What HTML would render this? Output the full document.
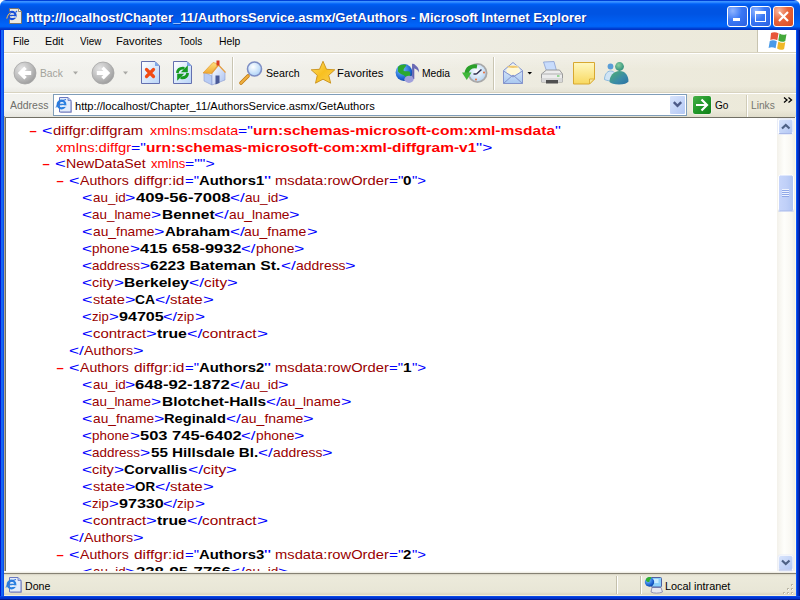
<!DOCTYPE html>
<html><head><meta charset="utf-8">
<style>
*{margin:0;padding:0;box-sizing:border-box}
html,body{width:800px;height:600px;overflow:hidden;background:#fff;font-family:"Liberation Sans",sans-serif}
.a{position:absolute}
.tx{position:absolute;white-space:nowrap;transform-origin:0 0}
#title{left:0;top:0;width:800px;height:30px;border-radius:6px 6px 0 0;
background:linear-gradient(#0040d8 0,#0040d8 1px,#3d95ff 1px,#3a90ff 2px,#1a78ff 3px,#0060f5 4px,#0058ea 6px,#0054e3 9px,#0054e3 14px,#005cee 20px,#0064fa 25px,#0062f5 26.5px,#0052e4 27.5px,#0040d4 28.5px,#0030c0 30px)}
#frameL{left:0;top:30px;width:4px;height:570px;background:linear-gradient(90deg,#0019d0 0,#0019d0 1px,#1466f6 1px,#1466f6 3px,#0a4ee8 3px)}
#frameR{left:796px;top:30px;width:4px;height:570px;background:linear-gradient(90deg,#0a56f8 0,#0a56f8 1px,#0038d8 1px,#0028b0 3px,#001890 3px)}
#frameB{left:0;top:596px;width:800px;height:4px;background:linear-gradient(#0a48e6 0,#0a48e6 1px,#0038d8 1px,#0030c8 3px,#001890 3px)}
.wb{position:absolute;top:6px;width:21px;height:21px;border:1px solid #fff;border-radius:3px;overflow:hidden}
.chrome{background:#ece9d8}
#menubar{left:4px;top:30px;width:792px;height:22px;background:linear-gradient(90deg,#f2f2ee 0,#f1f0ea 250px,#edebdf 550px,#ece9d9 792px)}
#logo{left:757px;top:30px;width:39px;height:22px;background:#fff;border-left:1px solid #c8c4b0}
#l52{left:4px;top:52px;width:792px;height:1px;background:#d8d3c0}
#l53{left:4px;top:53px;width:792px;height:1px;background:#fff}
#toolbar{left:4px;top:54px;width:792px;height:38px;background:linear-gradient(rgba(255,255,255,.3),rgba(255,255,255,0) 40%,rgba(0,0,0,0) 85%,rgba(90,80,40,.05)),linear-gradient(90deg,#f2f2ee 0,#f1f0ea 250px,#edebdf 550px,#ece9d9 792px)}
#l92{left:4px;top:92px;width:792px;height:1px;background:#d8d3c0}
#l93{left:4px;top:93px;width:792px;height:1px;background:#fff}
#addrbar{left:4px;top:94px;width:792px;height:23px;background:linear-gradient(rgba(0,0,0,0) 70%,rgba(90,80,40,.08)),linear-gradient(90deg,#f2f2ee 0,#f1f0ea 250px,#edebdf 550px,#ece9d9 792px)}
#addrbox{left:53px;top:94px;width:634px;height:22px;border:1px solid #7f9db9;background:#fff}
#content{left:4px;top:117px;width:773px;height:454px;background:#fff;overflow:hidden}
#scroll{left:777px;top:118px;width:18px;height:453px;background:linear-gradient(90deg,#f3f1ea,#fefefb 40%,#f8f7f2 80%,#eeede5)}
#status{left:4px;top:573px;width:792px;height:23px;background:linear-gradient(#858173 0,#858173 1px,#d0ccbc 1px,#e6e3d4 2px,#eceadb 4px,#e8e6d6 19px,#ddd8c4 21px,#ddd8c4 22px,#f4f0dc 22px)}
.g{position:absolute;white-space:nowrap;font-size:13px;line-height:17px;transform-origin:0 0}
.b{color:#f00;font-weight:bold}
.m{color:#00f}
.t{color:#900}
.ns{color:#f00}
.tx2{font-weight:bold;color:#000}
.nv{font-weight:bold;color:#f00}
.sep{position:absolute;width:2px;background:linear-gradient(90deg,#c5c2b2 1px,#fff 1px)}
</style></head><body>
<div id="title" class="a"></div>
<div id="frameL" class="a"></div>
<div id="frameR" class="a"></div>
<div id="frameB" class="a"></div>
<!-- window icon -->
<svg class="a" style="left:0;top:0" width="26" height="28" viewBox="0 0 26 28">
 <path d="M9.5 8.5h9l3 3v12h-12z" fill="#ecebe4" stroke="#7a7060" stroke-width="0.9"/>
 <path d="M18.5 8.5v3h3" fill="#fff" stroke="#7a7060" stroke-width="0.8"/>
 <circle cx="12" cy="15.5" r="3.6" fill="none" stroke="#1a50d8" stroke-width="2.2"/>
 <path d="M8.5 15.5h7" stroke="#1a50d8" stroke-width="1.5"/>
 <rect x="12" y="16.3" width="4" height="1.4" fill="#ecebe4"/>
 <path d="M15.5 12.5l1.5-1.5M6.5 19c0.5-3 2-5 4-6.5" fill="none" stroke="#2a60e0" stroke-width="1.2"/>
 <path d="M6.8 18.5c0.5-2.5 1.8-4.5 3.5-5.8" fill="none" stroke="#f0c040" stroke-width="1"/>
</svg>
<div class="wb" style="left:727px;background:radial-gradient(ellipse at 25% 20%,#8fb4ff 0,#3a78f5 45%,#2a5fe0 100%)"><div class="a" style="left:5px;top:11px;width:7px;height:3px;background:#fff"></div></div>
<div class="wb" style="left:750px;background:radial-gradient(ellipse at 25% 20%,#8fb4ff 0,#3a78f5 45%,#2a5fe0 100%)"><div class="a" style="left:4px;top:4px;width:11px;height:11px;border:1px solid #fff;border-top-width:3px"></div></div>
<div class="wb" style="left:773px;background:radial-gradient(ellipse at 25% 20%,#f8b8a0 0,#e8643a 45%,#d84a20 100%)">
 <svg class="a" style="left:3px;top:3px" width="13" height="13" viewBox="0 0 13 13"><path d="M2 2L11 11M11 2L2 11" stroke="#fff" stroke-width="2.2"/></svg></div>
<div id="menubar" class="a"></div>
<div id="logo" class="a">
 <svg class="a" style="left:8.5px;top:0px" width="22" height="20" viewBox="0 0 22 20">
  <path d="M4 3c2-1.2 5-1.2 7.5 0.3l-1.2 7c-2.5-1.5-5-1.5-7-0.3z" fill="#e8553a"/>
  <path d="M12.5 3.6c2.5 1.5 5 1.5 7 0.3l-1.2 7c-2 1.2-4.5 1.2-7-0.3z" fill="#44a83a"/>
  <path d="M2.8 11c2-1.2 4.5-1.2 7 0.3l-1.2 7c-2.5-1.5-5-1.5-7-0.3z" fill="#4a9ae8"/>
  <path d="M11.3 11.6c2.5 1.5 5 1.5 7 0.3l-1.2 7c-2 1.2-4.5 1.2-7-0.3z" fill="#f0b828"/>
 </svg>
</div>
<div id="l52" class="a"></div>
<div id="l53" class="a"></div>
<div id="toolbar" class="a"></div>
<div id="l92" class="a"></div>
<div id="l93" class="a"></div>
<div id="addrbar" class="a"></div>
<div id="addrbox" class="a"></div>
<div id="content" class="a"><span class="g b" style="left:25.5px;top:4.99px">&#8211;</span>
<span class="g m" style="left:38.29px;top:4.99px;transform:scaleX(1.3804)">&lt;</span>
<span class="g t" style="left:48.77px;top:4.99px;transform:scaleX(1.1409)">diffgr:diffgram</span>
<span class="g ns" style="left:145.84px;top:4.99px;transform:scaleX(1.0994)">xmlns:msdata</span>
<span class="g m" style="left:234.00px;top:4.99px;transform:scaleX(1.2054)">=&quot;</span>
<span class="g nv" style="left:248.71px;top:4.99px;transform:scaleX(1.1981)">urn:schemas-microsoft-com:xml-msdata</span>
<span class="g m" style="left:550.78px;top:4.99px;transform:scaleX(1.2635)">&quot;</span>
<span class="g ns" style="left:51.84px;top:21.99px;transform:scaleX(1.1345)">xmlns:diffgr</span>
<span class="g m" style="left:127.24px;top:21.99px;transform:scaleX(1.2187)">=&quot;</span>
<span class="g nv" style="left:142.11px;top:21.99px;transform:scaleX(1.1909)">urn:schemas-microsoft-com:xml-diffgram-v1</span>
<span class="g m" style="left:472.45px;top:21.99px;transform:scaleX(1.3313)">&quot;&gt;</span>
<span class="g b" style="left:38.5px;top:37.99px">&#8211;</span>
<span class="g m" style="left:50.79px;top:37.99px;transform:scaleX(1.4140)">&lt;</span>
<span class="g t" style="left:61.53px;top:37.99px;transform:scaleX(1.0904)">NewDataSet</span>
<span class="g ns" style="left:146.84px;top:37.99px;transform:scaleX(1.0083)">xmlns</span>
<span class="g m" style="left:181.07px;top:37.99px;transform:scaleX(1.2137)">=&quot;&quot;&gt;</span>
<span class="g b" style="left:52.5px;top:54.99px">&#8211;</span>
<span class="g m" style="left:65.29px;top:54.99px;transform:scaleX(1.3832)">&lt;</span>
<span class="g t" style="left:75.80px;top:54.99px;transform:scaleX(1.0875)">Authors</span>
<span class="g t" style="left:129.90px;top:54.99px;transform:scaleX(1.1898)">diffgr:id</span>
<span class="g m" style="left:180.62px;top:54.99px;transform:scaleX(1.1487)">=&quot;</span>
<span class="g tx2" style="left:194.64px;top:54.99px;transform:scaleX(1.1419)">Authors1</span>
<span class="g m" style="left:259.80px;top:54.99px;transform:scaleX(1.5477)">&quot;</span>
<span class="g t" style="left:271.05px;top:54.99px;transform:scaleX(1.1331)">msdata:rowOrder</span>
<span class="g m" style="left:384.84px;top:54.99px;transform:scaleX(1.1795)">=&quot;</span>
<span class="g tx2" style="left:399.23px;top:54.99px;transform:scaleX(1.1690)">0</span>
<span class="g m" style="left:407.69px;top:54.99px;transform:scaleX(1.1479)">&quot;&gt;</span>
<span class="g m" style="left:78.29px;top:71.99px;transform:scaleX(1.3618)">&lt;</span>
<span class="g t" style="left:88.63px;top:71.99px;transform:scaleX(1.0315)">au_id</span>
<span class="g m" style="left:121.44px;top:71.99px;transform:scaleX(1.3618)">&gt;</span>
<span class="g tx2" style="left:131.78px;top:71.99px;transform:scaleX(1.2819)">409-56-7008</span>
<span class="g m" style="left:226.29px;top:71.99px;transform:scaleX(1.3109)">&lt;/</span>
<span class="g t" style="left:240.98px;top:71.99px;transform:scaleX(1.0451)">au_id</span>
<span class="g m" style="left:274.22px;top:71.99px;transform:scaleX(1.3797)">&gt;</span>
<span class="g m" style="left:78.29px;top:88.99px;transform:scaleX(1.3382)">&lt;</span>
<span class="g t" style="left:88.45px;top:88.99px;transform:scaleX(1.0321)">au_lname</span>
<span class="g m" style="left:147.38px;top:88.99px;transform:scaleX(1.3382)">&gt;</span>
<span class="g tx2" style="left:157.54px;top:88.99px;transform:scaleX(1.1927)">Bennet</span>
<span class="g m" style="left:210.09px;top:88.99px;transform:scaleX(1.3060)">&lt;/</span>
<span class="g t" style="left:224.73px;top:88.99px;transform:scaleX(1.0602)">au_lname</span>
<span class="g m" style="left:285.26px;top:88.99px;transform:scaleX(1.3746)">&gt;</span>
<span class="g m" style="left:78.29px;top:105.99px;transform:scaleX(1.3749)">&lt;</span>
<span class="g t" style="left:88.73px;top:105.99px;transform:scaleX(1.0632)">au_fname</span>
<span class="g m" style="left:150.21px;top:105.99px;transform:scaleX(1.3749)">&gt;</span>
<span class="g tx2" style="left:160.64px;top:105.99px;transform:scaleX(1.1527)">Abraham</span>
<span class="g m" style="left:225.59px;top:105.99px;transform:scaleX(1.3238)">&lt;/</span>
<span class="g t" style="left:240.43px;top:105.99px;transform:scaleX(1.0774)">au_fname</span>
<span class="g m" style="left:302.72px;top:105.99px;transform:scaleX(1.3933)">&gt;</span>
<span class="g m" style="left:78.29px;top:122.99px;transform:scaleX(1.3204)">&lt;</span>
<span class="g t" style="left:88.32px;top:122.99px;transform:scaleX(1.0357)">phone</span>
<span class="g m" style="left:125.76px;top:122.99px;transform:scaleX(1.3204)">&gt;</span>
<span class="g tx2" style="left:135.78px;top:122.99px;transform:scaleX(1.2651)">415&nbsp;658-9932</span>
<span class="g m" style="left:237.29px;top:122.99px;transform:scaleX(1.2848)">&lt;/</span>
<span class="g t" style="left:251.69px;top:122.99px;transform:scaleX(1.0607)">phone</span>
<span class="g m" style="left:290.03px;top:122.99px;transform:scaleX(1.3523)">&gt;</span>
<span class="g m" style="left:78.29px;top:139.99px;transform:scaleX(1.3374)">&lt;</span>
<span class="g t" style="left:88.45px;top:139.99px;transform:scaleX(1.0351)">address</span>
<span class="g m" style="left:136.32px;top:139.99px;transform:scaleX(1.3374)">&gt;</span>
<span class="g tx2" style="left:146.48px;top:139.99px;transform:scaleX(1.2114)">6223&nbsp;Bateman&nbsp;St.</span>
<span class="g m" style="left:276.89px;top:139.99px;transform:scaleX(1.3153)">&lt;/</span>
<span class="g t" style="left:291.63px;top:139.99px;transform:scaleX(1.0715)">address</span>
<span class="g m" style="left:341.19px;top:139.99px;transform:scaleX(1.3844)">&gt;</span>
<span class="g m" style="left:78.29px;top:156.99px;transform:scaleX(1.3213)">&lt;</span>
<span class="g t" style="left:88.33px;top:156.99px;transform:scaleX(1.1121)">city</span>
<span class="g m" style="left:110.01px;top:156.99px;transform:scaleX(1.3213)">&gt;</span>
<span class="g tx2" style="left:120.04px;top:156.99px;transform:scaleX(1.1982)">Berkeley</span>
<span class="g m" style="left:184.99px;top:156.99px;transform:scaleX(1.3354)">&lt;/</span>
<span class="g t" style="left:199.96px;top:156.99px;transform:scaleX(1.1831)">city</span>
<span class="g m" style="left:223.03px;top:156.99px;transform:scaleX(1.4056)">&gt;</span>
<span class="g m" style="left:78.29px;top:173.99px;transform:scaleX(1.3863)">&lt;</span>
<span class="g t" style="left:88.82px;top:173.99px;transform:scaleX(1.1290)">state</span>
<span class="g m" style="left:120.64px;top:173.99px;transform:scaleX(1.3863)">&gt;</span>
<span class="g tx2" style="left:131.16px;top:173.99px;transform:scaleX(1.0668)">CA</span>
<span class="g m" style="left:151.19px;top:173.99px;transform:scaleX(1.3518)">&lt;/</span>
<span class="g t" style="left:166.34px;top:173.99px;transform:scaleX(1.1587)">state</span>
<span class="g m" style="left:199.00px;top:173.99px;transform:scaleX(1.4228)">&gt;</span>
<span class="g m" style="left:78.29px;top:190.99px;transform:scaleX(1.2872)">&lt;</span>
<span class="g t" style="left:88.07px;top:190.99px;transform:scaleX(1.0088)">zip</span>
<span class="g m" style="left:104.83px;top:190.99px;transform:scaleX(1.2872)">&gt;</span>
<span class="g tx2" style="left:114.60px;top:190.99px;transform:scaleX(1.2390)">94705</span>
<span class="g m" style="left:159.39px;top:190.99px;transform:scaleX(1.2553)">&lt;/</span>
<span class="g t" style="left:173.46px;top:190.99px;transform:scaleX(1.0355)">zip</span>
<span class="g m" style="left:190.67px;top:190.99px;transform:scaleX(1.3213)">&gt;</span>
<span class="g m" style="left:78.29px;top:207.99px;transform:scaleX(1.4131)">&lt;</span>
<span class="g t" style="left:89.02px;top:207.99px;transform:scaleX(1.1499)">contract</span>
<span class="g m" style="left:142.20px;top:207.99px;transform:scaleX(1.4131)">&gt;</span>
<span class="g tx2" style="left:152.93px;top:207.99px;transform:scaleX(1.2122)">true</span>
<span class="g m" style="left:182.69px;top:207.99px;transform:scaleX(1.3775)">&lt;/</span>
<span class="g t" style="left:198.13px;top:207.99px;transform:scaleX(1.1799)">contract</span>
<span class="g m" style="left:252.69px;top:207.99px;transform:scaleX(1.4499)">&gt;</span>
<span class="g m" style="left:65.29px;top:224.99px;transform:scaleX(1.3240)">&lt;/</span>
<span class="g t" style="left:80.13px;top:224.99px;transform:scaleX(1.0957)">Authors</span>
<span class="g m" style="left:129.22px;top:224.99px;transform:scaleX(1.3936)">&gt;</span>
<span class="g b" style="left:52.5px;top:241.99px">&#8211;</span>
<span class="g m" style="left:65.29px;top:241.99px;transform:scaleX(1.3832)">&lt;</span>
<span class="g t" style="left:75.80px;top:241.99px;transform:scaleX(1.0875)">Authors</span>
<span class="g t" style="left:129.90px;top:241.99px;transform:scaleX(1.1898)">diffgr:id</span>
<span class="g m" style="left:180.62px;top:241.99px;transform:scaleX(1.1487)">=&quot;</span>
<span class="g tx2" style="left:194.64px;top:241.99px;transform:scaleX(1.1449)">Authors2</span>
<span class="g m" style="left:259.97px;top:241.99px;transform:scaleX(1.5098)">&quot;</span>
<span class="g t" style="left:271.05px;top:241.99px;transform:scaleX(1.1331)">msdata:rowOrder</span>
<span class="g m" style="left:384.84px;top:241.99px;transform:scaleX(1.1520)">=&quot;</span>
<span class="g tx2" style="left:398.90px;top:241.99px;transform:scaleX(1.1893)">1</span>
<span class="g m" style="left:407.50px;top:241.99px;transform:scaleX(1.1633)">&quot;&gt;</span>
<span class="g m" style="left:78.29px;top:258.99px;transform:scaleX(1.3540)">&lt;</span>
<span class="g t" style="left:88.57px;top:258.99px;transform:scaleX(1.0256)">au_id</span>
<span class="g m" style="left:121.20px;top:258.99px;transform:scaleX(1.3540)">&gt;</span>
<span class="g tx2" style="left:131.48px;top:258.99px;transform:scaleX(1.2861)">648-92-1872</span>
<span class="g m" style="left:226.29px;top:258.99px;transform:scaleX(1.3109)">&lt;/</span>
<span class="g t" style="left:240.98px;top:258.99px;transform:scaleX(1.0451)">au_id</span>
<span class="g m" style="left:274.22px;top:258.99px;transform:scaleX(1.3797)">&gt;</span>
<span class="g m" style="left:78.29px;top:275.99px;transform:scaleX(1.3382)">&lt;</span>
<span class="g t" style="left:88.45px;top:275.99px;transform:scaleX(1.0321)">au_lname</span>
<span class="g m" style="left:147.38px;top:275.99px;transform:scaleX(1.3382)">&gt;</span>
<span class="g tx2" style="left:157.54px;top:275.99px;transform:scaleX(1.1917)">Blotchet-Halls</span>
<span class="g m" style="left:261.69px;top:275.99px;transform:scaleX(1.3075)">&lt;/</span>
<span class="g t" style="left:276.34px;top:275.99px;transform:scaleX(1.0615)">au_lname</span>
<span class="g m" style="left:336.95px;top:275.99px;transform:scaleX(1.3762)">&gt;</span>
<span class="g m" style="left:78.29px;top:292.99px;transform:scaleX(1.3649)">&lt;</span>
<span class="g t" style="left:88.66px;top:292.99px;transform:scaleX(1.0554)">au_fname</span>
<span class="g m" style="left:149.68px;top:292.99px;transform:scaleX(1.3649)">&gt;</span>
<span class="g tx2" style="left:160.04px;top:292.99px;transform:scaleX(1.1267)">Reginald</span>
<span class="g m" style="left:221.89px;top:292.99px;transform:scaleX(1.3253)">&lt;/</span>
<span class="g t" style="left:236.74px;top:292.99px;transform:scaleX(1.0786)">au_fname</span>
<span class="g m" style="left:299.11px;top:292.99px;transform:scaleX(1.3949)">&gt;</span>
<span class="g m" style="left:78.29px;top:309.99px;transform:scaleX(1.3153)">&lt;</span>
<span class="g t" style="left:88.28px;top:309.99px;transform:scaleX(1.0317)">phone</span>
<span class="g m" style="left:125.57px;top:309.99px;transform:scaleX(1.3153)">&gt;</span>
<span class="g tx2" style="left:135.56px;top:309.99px;transform:scaleX(1.2679)">503&nbsp;745-6402</span>
<span class="g m" style="left:237.29px;top:309.99px;transform:scaleX(1.2848)">&lt;/</span>
<span class="g t" style="left:251.69px;top:309.99px;transform:scaleX(1.0607)">phone</span>
<span class="g m" style="left:290.03px;top:309.99px;transform:scaleX(1.3523)">&gt;</span>
<span class="g m" style="left:78.29px;top:326.99px;transform:scaleX(1.3391)">&lt;</span>
<span class="g t" style="left:88.46px;top:326.99px;transform:scaleX(1.0364)">address</span>
<span class="g m" style="left:136.39px;top:326.99px;transform:scaleX(1.3391)">&gt;</span>
<span class="g tx2" style="left:146.56px;top:326.99px;transform:scaleX(1.1686)">55&nbsp;Hillsdale&nbsp;Bl.</span>
<span class="g m" style="left:253.79px;top:326.99px;transform:scaleX(1.3136)">&lt;/</span>
<span class="g t" style="left:268.51px;top:326.99px;transform:scaleX(1.0701)">address</span>
<span class="g m" style="left:318.00px;top:326.99px;transform:scaleX(1.3826)">&gt;</span>
<span class="g m" style="left:78.29px;top:343.99px;transform:scaleX(1.3330)">&lt;</span>
<span class="g t" style="left:88.41px;top:343.99px;transform:scaleX(1.1220)">city</span>
<span class="g m" style="left:110.29px;top:343.99px;transform:scaleX(1.3330)">&gt;</span>
<span class="g tx2" style="left:120.41px;top:343.99px;transform:scaleX(1.1524)">Corvallis</span>
<span class="g m" style="left:183.69px;top:343.99px;transform:scaleX(1.3519)">&lt;/</span>
<span class="g t" style="left:198.84px;top:343.99px;transform:scaleX(1.1977)">city</span>
<span class="g m" style="left:222.20px;top:343.99px;transform:scaleX(1.4229)">&gt;</span>
<span class="g m" style="left:78.29px;top:360.99px;transform:scaleX(1.3863)">&lt;</span>
<span class="g t" style="left:88.82px;top:360.99px;transform:scaleX(1.1290)">state</span>
<span class="g m" style="left:120.64px;top:360.99px;transform:scaleX(1.3863)">&gt;</span>
<span class="g tx2" style="left:131.16px;top:360.99px;transform:scaleX(1.0272)">OR</span>
<span class="g m" style="left:151.19px;top:360.99px;transform:scaleX(1.3541)">&lt;/</span>
<span class="g t" style="left:166.37px;top:360.99px;transform:scaleX(1.1607)">state</span>
<span class="g m" style="left:199.08px;top:360.99px;transform:scaleX(1.4252)">&gt;</span>
<span class="g m" style="left:78.29px;top:377.99px;transform:scaleX(1.2872)">&lt;</span>
<span class="g t" style="left:88.07px;top:377.99px;transform:scaleX(1.0088)">zip</span>
<span class="g m" style="left:104.83px;top:377.99px;transform:scaleX(1.2872)">&gt;</span>
<span class="g tx2" style="left:114.60px;top:377.99px;transform:scaleX(1.2390)">97330</span>
<span class="g m" style="left:159.39px;top:377.99px;transform:scaleX(1.2553)">&lt;/</span>
<span class="g t" style="left:173.46px;top:377.99px;transform:scaleX(1.0355)">zip</span>
<span class="g m" style="left:190.67px;top:377.99px;transform:scaleX(1.3213)">&gt;</span>
<span class="g m" style="left:78.29px;top:394.99px;transform:scaleX(1.4131)">&lt;</span>
<span class="g t" style="left:89.02px;top:394.99px;transform:scaleX(1.1499)">contract</span>
<span class="g m" style="left:142.20px;top:394.99px;transform:scaleX(1.4131)">&gt;</span>
<span class="g tx2" style="left:152.93px;top:394.99px;transform:scaleX(1.2122)">true</span>
<span class="g m" style="left:182.69px;top:394.99px;transform:scaleX(1.3775)">&lt;/</span>
<span class="g t" style="left:198.13px;top:394.99px;transform:scaleX(1.1799)">contract</span>
<span class="g m" style="left:252.69px;top:394.99px;transform:scaleX(1.4499)">&gt;</span>
<span class="g m" style="left:65.29px;top:411.99px;transform:scaleX(1.3240)">&lt;/</span>
<span class="g t" style="left:80.13px;top:411.99px;transform:scaleX(1.0957)">Authors</span>
<span class="g m" style="left:129.22px;top:411.99px;transform:scaleX(1.3936)">&gt;</span>
<span class="g b" style="left:52.5px;top:428.99px">&#8211;</span>
<span class="g m" style="left:65.29px;top:428.99px;transform:scaleX(1.3832)">&lt;</span>
<span class="g t" style="left:75.80px;top:428.99px;transform:scaleX(1.0875)">Authors</span>
<span class="g t" style="left:129.90px;top:428.99px;transform:scaleX(1.1898)">diffgr:id</span>
<span class="g m" style="left:180.62px;top:428.99px;transform:scaleX(1.1487)">=&quot;</span>
<span class="g tx2" style="left:194.64px;top:428.99px;transform:scaleX(1.1440)">Authors3</span>
<span class="g m" style="left:259.92px;top:428.99px;transform:scaleX(1.5220)">&quot;</span>
<span class="g t" style="left:271.05px;top:428.99px;transform:scaleX(1.1331)">msdata:rowOrder</span>
<span class="g m" style="left:384.84px;top:428.99px;transform:scaleX(1.1852)">=&quot;</span>
<span class="g tx2" style="left:399.30px;top:428.99px;transform:scaleX(1.1574)">2</span>
<span class="g m" style="left:407.67px;top:428.99px;transform:scaleX(1.1490)">&quot;&gt;</span>
<span class="g m" style="left:78.29px;top:445.99px;transform:scaleX(1.3547)">&lt;</span>
<span class="g t" style="left:88.58px;top:445.99px;transform:scaleX(1.0262)">au_id</span>
<span class="g m" style="left:121.22px;top:445.99px;transform:scaleX(1.3547)">&gt;</span>
<span class="g tx2" style="left:131.50px;top:445.99px;transform:scaleX(1.2857)">238-95-7766</span>
<span class="g m" style="left:226.29px;top:445.99px;transform:scaleX(1.3109)">&lt;/</span>
<span class="g t" style="left:240.98px;top:445.99px;transform:scaleX(1.0451)">au_id</span>
<span class="g m" style="left:274.22px;top:445.99px;transform:scaleX(1.3797)">&gt;</span></div>
<div id="scroll" class="a"></div>
<div class="a" style="left:4px;top:116px;width:1px;height:456px;background:#aca899"></div>
<div class="a" style="left:5px;top:117px;width:1px;height:454px;background:#716f64"></div>
<div class="a" style="left:5px;top:117px;width:790px;height:1px;background:#716f64"></div>
<div class="a" style="left:795px;top:117px;width:1px;height:456px;background:#fbf8ec"></div>
<div class="a" style="left:4px;top:571px;width:791px;height:1px;background:#fbfaf6"></div>
<div class="a" style="left:4px;top:572px;width:792px;height:1px;background:#f0eee6"></div>
<div id="status" class="a"></div>
<svg class="a" style="left:0;top:0" width="800" height="600" viewBox="0 0 800 600">
<defs>
 <radialGradient id="gcirc" cx="0.35" cy="0.3" r="0.75"><stop offset="0" stop-color="#e4e4e4"/><stop offset="0.6" stop-color="#bcbcbc"/><stop offset="1" stop-color="#9c9c9c"/></radialGradient>
 <linearGradient id="gpage" x1="0" y1="0" x2="1" y2="1"><stop offset="0" stop-color="#ffffff"/><stop offset="1" stop-color="#b8d4f8"/></linearGradient>
 <linearGradient id="groof" x1="0" y1="0" x2="0" y2="1"><stop offset="0" stop-color="#fde080"/><stop offset="1" stop-color="#f0a830"/></linearGradient>
 <linearGradient id="gwall" x1="0" y1="0" x2="1" y2="1"><stop offset="0" stop-color="#ffffff"/><stop offset="1" stop-color="#a8c0f0"/></linearGradient>
 <radialGradient id="glens" cx="0.4" cy="0.35" r="0.7"><stop offset="0" stop-color="#ffffff"/><stop offset="1" stop-color="#a8d0f8"/></radialGradient>
 <linearGradient id="gstar" x1="0" y1="0" x2="1" y2="1"><stop offset="0" stop-color="#ffe070"/><stop offset="0.5" stop-color="#f8c020"/><stop offset="1" stop-color="#fad050"/></linearGradient>
 <radialGradient id="gglobe" cx="0.35" cy="0.3" r="0.8"><stop offset="0" stop-color="#80c8ff"/><stop offset="0.7" stop-color="#1a60d0"/><stop offset="1" stop-color="#0a3890"/></radialGradient>
 <radialGradient id="gclock" cx="0.45" cy="0.4" r="0.7"><stop offset="0" stop-color="#ffffff"/><stop offset="1" stop-color="#b0d0f0"/></radialGradient>
 <linearGradient id="genv" x1="0" y1="0" x2="0" y2="1"><stop offset="0" stop-color="#f0f6ff"/><stop offset="1" stop-color="#a8c8f0"/></linearGradient>
 <linearGradient id="gnote" x1="0" y1="0" x2="0" y2="1"><stop offset="0" stop-color="#fff8c0"/><stop offset="1" stop-color="#f8d860"/></linearGradient>
 <linearGradient id="ggo" x1="0" y1="0" x2="1" y2="1"><stop offset="0" stop-color="#48b048"/><stop offset="0.5" stop-color="#22982a"/><stop offset="1" stop-color="#108018"/></linearGradient>
 <linearGradient id="gsb" x1="0" y1="0" x2="1" y2="1"><stop offset="0" stop-color="#d8e4fc"/><stop offset="1" stop-color="#b4c8f4"/></linearGradient>
 <linearGradient id="gthumb" x1="0" y1="0" x2="1" y2="0"><stop offset="0" stop-color="#c8d6fb"/><stop offset="0.5" stop-color="#c0d0f8"/><stop offset="1" stop-color="#b0c4f2"/></linearGradient>
</defs>
<!-- Back -->
<circle cx="25" cy="73" r="11" fill="url(#gcirc)" stroke="#a4a4a4" stroke-width="0.8"/>
<path d="M17.8 73L24.3 66.5L26.8 69L24.6 71.1H31.2V74.9H24.6L26.8 77L24.3 79.5Z" fill="#fff"/>
<path d="M73 71.5h5l-2.5 3z" fill="#a8a8a4"/>
<!-- Forward -->
<circle cx="103" cy="73" r="11" fill="url(#gcirc)" stroke="#a4a4a4" stroke-width="0.8"/>
<path d="M110.2 73L103.7 66.5L101.2 69L103.4 71.1H96.8V74.9H103.4L101.2 77L103.7 79.5Z" fill="#fff"/>
<path d="M123 71.5h5l-2.5 3z" fill="#a8a8a4"/>
<!-- Stop -->
<path d="M141.5 61.5H155L159.5 66V83.5H141.5Z" fill="url(#gpage)" stroke="#6470b0" stroke-width="1"/>
<path d="M155 61.5V66H159.5Z" fill="#7ea8e8"/>
<path d="M146.5 69.5L153.5 76.5M153.5 69.5L146.5 76.5" stroke="#f24a14" stroke-width="3.2" stroke-linecap="round"/>
<!-- Refresh -->
<path d="M173.5 61.5H187L191.5 66V83.5H173.5Z" fill="url(#gpage)" stroke="#6470b0" stroke-width="1"/>
<path d="M187 61.5V66H191.5Z" fill="#7ea8e8"/>
<path d="M177.3 73Q178 67.5 184.5 68.3" fill="none" stroke="#169a22" stroke-width="2.8"/>
<path d="M187.8 65.2V72.2H180.8Z" fill="#169a22"/>
<path d="M187.7 73Q187 78.5 180.5 77.7" fill="none" stroke="#169a22" stroke-width="2.8"/>
<path d="M177.2 80.8V73.8H184.2Z" fill="#169a22"/>
<!-- Home -->
<path d="M204 72V81L212 85V76Z" fill="#b8ccf4" stroke="#8a9ad0" stroke-width="0.6"/>
<path d="M212 76V85L225 80V72L218.5 65L212 72Z" fill="url(#gwall)" stroke="#8a9ad0" stroke-width="0.6"/>
<path d="M215.5 75.5h4v7.5l-4 1.5z" fill="#4a5a98"/>
<path d="M203 73L213 62.5L219 64L211.5 73.5Z" fill="url(#groof)" stroke="#e09020" stroke-width="0.6"/>
<path d="M211.5 73.5L218.5 65L225.5 72.5" fill="none" stroke="#e8a040" stroke-width="1.2"/>
<rect x="216.5" y="60.5" width="3" height="5" fill="#d83a20"/>
<!-- Separator 1 -->
<rect x="232" y="57" width="1" height="33" fill="#c9c5b2"/><rect x="233" y="57" width="1" height="33" fill="#fff"/>
<!-- Search -->
<path d="M241 83L248 76" stroke="#c07a10" stroke-width="3.6" stroke-linecap="round"/>
<path d="M241 83L248 76" stroke="#f0b040" stroke-width="2" stroke-linecap="round"/>
<circle cx="254.5" cy="69" r="7" fill="url(#glens)" stroke="#7e8ec4" stroke-width="1.6"/>
<!-- Favorites star -->
<path d="M323 61.3L326.5 69.3L334.8 69.8L328.7 75.3L330.7 83.2L323 79.2L315.5 83.2L317.3 75.3L311.2 69.8L319.5 69.3Z" fill="url(#gstar)" stroke="#c89018" stroke-width="0.9" stroke-linejoin="round"/>
<!-- Media -->
<circle cx="404" cy="72.5" r="8.4" fill="url(#gglobe)"/>
<path d="M398 67c2-2.5 6-3 8.5-2c-0.5 2-3 3-3 5.5c1.5 1.5 4 0 6.5 1.5c1 2 0 5-2 7.5c-2-1-2.5-3.5-4.5-4.5c-2-0.5-4-1.5-5.5-3.5z" fill="#2ca830"/>
<path d="M413.2 64v15" stroke="#6464b0" stroke-width="2.2"/>
<path d="M412.5 63.5c3 1.5 7 4 6.5 9c-1-2.5-3.5-4-6.5-4.5z" fill="#6a6ab4"/>
<ellipse cx="409" cy="79.3" rx="4.6" ry="3.6" fill="#a0a0dc"/>
<!-- History -->
<circle cx="477.5" cy="73" r="10" fill="#a8a8a8"/>
<circle cx="477.5" cy="73" r="8.2" fill="url(#gclock)"/>
<path d="M476.5 74l5-4.5M476.5 74h-3" stroke="#303050" stroke-width="1.5"/>
<circle cx="484" cy="72.5" r="0.9" fill="#f06020"/><circle cx="476" cy="79.5" r="0.9" fill="#f06020"/>
<path d="M477 66.5c-6-1-10 2-10.5 7" fill="none" stroke="#2aa02a" stroke-width="4"/>
<path d="M462 72.5h9.5l-4.75 7.5z" fill="#40b83a"/>
<!-- Separator 2 -->
<rect x="493" y="57" width="1" height="33" fill="#c9c5b2"/><rect x="494" y="57" width="1" height="33" fill="#fff"/>
<!-- Mail -->
<path d="M503.5 70.5L513 62.5L522.5 70.5V83.5H503.5Z" fill="url(#genv)" stroke="#8494cc" stroke-width="1"/>
<path d="M506.5 69.5L510 65.5h7l3 4v3L513 76L506.5 72.5Z" fill="#fff8d8"/>
<path d="M507 66.5c3-1 9-1 12 0.5c-2 1-8 1.5-12 0z" fill="#f0c870"/>
<path d="M503.5 83.5L513 75L522.5 83.5M503.5 71L513 77L522.5 71" fill="none" stroke="#8494cc" stroke-width="1"/>
<path d="M527.5 72h4.5l-2.25 2.5z" fill="#000"/>
<!-- Printer -->
<path d="M543.5 62l10.5-0.5l3 11h-10z" fill="#c8dcfc" stroke="#8aa0d0" stroke-width="0.8"/>
<path d="M541.5 74l5-4h13l3 4v8h-21z" fill="#ececec" stroke="#909090" stroke-width="0.9"/>
<path d="M541.5 74h21" stroke="#b0b0b0" stroke-width="1"/>
<path d="M541.5 78h21v4h-21z" fill="#d8d8d8"/>
<path d="M546 80h12v3.5h-12z" fill="#505050"/>
<rect x="557" y="75.5" width="2.5" height="1" fill="#40c040"/>
<!-- Note -->
<path d="M573.5 62.5H594.5V79L589.5 84H573.5Z" fill="url(#gnote)" stroke="#d8a830" stroke-width="1"/>
<path d="M589.5 84V79H594.5Z" fill="#f8e8a0" stroke="#d8a830" stroke-width="0.8"/>
<!-- Messenger -->
<radialGradient id="gmh" cx="0.4" cy="0.35" r="0.7"><stop offset="0" stop-color="#8ad0a0"/><stop offset="1" stop-color="#2a8a78"/></radialGradient>
<linearGradient id="gmb" x1="0" y1="0" x2="1" y2="1"><stop offset="0" stop-color="#50b070"/><stop offset="0.6" stop-color="#3a8aa8"/><stop offset="1" stop-color="#2a70a0"/></linearGradient>
<circle cx="610.5" cy="66.5" r="2.9" fill="#5a9ed8"/>
<path d="M604.5 79.5c0-4 2-8.5 6-8.5s5 3 5.5 5.5l-3.5 4.5c-3 0-6-0.5-8-1.5z" fill="#d0e4f4" stroke="#7ab0dc" stroke-width="0.8"/>
<circle cx="619.5" cy="66.5" r="4.4" fill="url(#gmh)"/>
<path d="M609.5 82c0-6 4-11 10-11s9 5 9 10.5c-1.5 2-4.5 3-9.5 3s-8-1-9.5-2.5z" fill="url(#gmb)"/>
<!-- Address page icon -->
<path d="M60.5 98.5H68.5L72 102V113H60.5Z" fill="#8080b0" opacity="0.5"/>
<path d="M59.5 97.5H68L71 100.5V112H59.5Z" fill="#e4ecfa" stroke="#6a78c0" stroke-width="1"/>
<path d="M68 97.5V100.5H71" fill="#b0c4f0" stroke="#6a78c0" stroke-width="0.8"/>
<circle cx="61.5" cy="104.5" r="3.8" fill="none" stroke="#2a80e0" stroke-width="2.2"/>
<path d="M57.5 104.5h8" stroke="#2a80e0" stroke-width="1.6"/>
<rect x="61.8" y="105.3" width="4.5" height="1.6" fill="#e4ecfa"/>
<path d="M56 107.5c1-3 4-6.5 10-8" fill="none" stroke="#2a70d8" stroke-width="1"/>
<!-- Address dropdown -->
<rect x="670" y="96" width="15" height="18" rx="1" fill="url(#gsb)"/>
<path d="M673.8 102.2l3.7 3.7l3.7-3.7" fill="none" stroke="#4d5b88" stroke-width="2.4"/>
<!-- Go -->
<rect x="692.5" y="95.5" width="19" height="19" rx="2" fill="#fff" opacity="0.7"/>
<rect x="693" y="96" width="18" height="18" rx="2" fill="url(#ggo)"/>
<path d="M696 105h10M701.5 99.5l5.5 5.5l-5.5 5.5" fill="none" stroke="#fff" stroke-width="2.2"/>
<!-- Links separator -->
<rect x="746" y="95" width="1" height="22" fill="#d0ccb8"/><rect x="747" y="95" width="1" height="22" fill="#fff"/>
<path d="M784 97.5l3 2.5l-3 2.5M788.5 97.5l3 2.5l-3 2.5" fill="none" stroke="#000" stroke-width="1.3"/>
<!-- Scrollbar up -->
<rect x="777.5" y="118.5" width="16" height="16" rx="2" fill="#fff" stroke="#e8ecf8" stroke-width="1"/>
<rect x="779" y="119.5" width="13.5" height="13.5" rx="1.5" fill="url(#gsb)"/>
<rect x="779" y="133" width="13" height="1" fill="#a8b8e8"/>
<path d="M782 128.5l3.75-3.5l3.75 3.5" fill="none" stroke="#4d6185" stroke-width="2.2"/>
<!-- thumb -->
<rect x="778.5" y="175" width="15" height="36.5" rx="2" fill="url(#gthumb)" stroke="#fff" stroke-width="1"/>
<rect x="778.5" y="210.5" width="15" height="1" fill="#a8b8e8"/>
<rect x="782" y="189" width="7" height="1" fill="#eef3fe"/><rect x="782" y="190" width="7" height="1" fill="#90a8e8"/>
<rect x="782" y="191" width="7" height="1" fill="#eef3fe"/><rect x="782" y="192" width="7" height="1" fill="#90a8e8"/>
<rect x="782" y="193" width="7" height="1" fill="#eef3fe"/><rect x="782" y="194" width="7" height="1" fill="#90a8e8"/>
<rect x="782" y="195" width="7" height="1" fill="#eef3fe"/><rect x="782" y="196" width="7" height="1" fill="#90a8e8"/>
<!-- Scrollbar down -->
<rect x="778" y="555" width="15.5" height="16" rx="2" fill="#fff" stroke="#e8ecf8" stroke-width="1"/>
<rect x="779" y="556" width="13.5" height="13.5" rx="1.5" fill="url(#gsb)"/>
<rect x="779" y="569.5" width="13" height="1" fill="#a8b8e8"/>
<path d="M782 560.5l3.75 3.5l3.75-3.5" fill="none" stroke="#4d6185" stroke-width="2.2"/>
<!-- Status icon -->
<path d="M10.5 578.5H18.5L22 582V593H10.5Z" fill="#8080b0" opacity="0.5"/>
<path d="M9.5 577.5H18L21 580.5V592H9.5Z" fill="#e4ecfa" stroke="#6a78c0" stroke-width="1"/>
<path d="M18 577.5V580.5H21" fill="#b0c4f0" stroke="#6a78c0" stroke-width="0.8"/>
<circle cx="11.5" cy="584.5" r="3.8" fill="none" stroke="#2a80e0" stroke-width="2.2"/>
<path d="M7.5 584.5h8" stroke="#2a80e0" stroke-width="1.6"/>
<rect x="11.8" y="585.3" width="4.5" height="1.6" fill="#e4ecfa"/>
<path d="M6 587.5c1-3 4-6.5 10-8" fill="none" stroke="#2a70d8" stroke-width="1"/>
<!-- status separators -->
<rect x="616" y="576" width="1" height="18" fill="#c4c0ac"/><rect x="617" y="576" width="1" height="18" fill="#fff"/>
<rect x="640" y="576" width="1" height="18" fill="#c4c0ac"/><rect x="641" y="576" width="1" height="18" fill="#fff"/>
<!-- zone icon -->
<path d="M652 587.5h9l1.5 4.5c-3 1.5-9 1.5-11.5 0z" fill="#e8e8f0" stroke="#8080a8" stroke-width="0.8"/>
<rect x="651" y="577.5" width="10.5" height="9.5" rx="1" fill="#8cd0fa" stroke="#5060a0" stroke-width="1"/>
<rect x="652.5" y="579" width="6" height="4" fill="#c8ecff"/>
<circle cx="649.5" cy="582" r="4.7" fill="url(#gglobe)"/>
<path d="M646 579c1.5-2 4-2.5 5.5-1.5c-0.5 1.5-2 2-2 4c-1 1-2.5 0.5-3.5-1z" fill="#30b030"/>
<!-- grip -->
<g fill="#bdb9a6"><rect x="791" y="584" width="2" height="2"/><rect x="787" y="588" width="2" height="2"/><rect x="791" y="588" width="2" height="2"/><rect x="783" y="592" width="2" height="2"/><rect x="787" y="592" width="2" height="2"/><rect x="791" y="592" width="2" height="2"/></g>
<g fill="#fff"><rect x="792" y="585" width="1" height="1"/><rect x="788" y="589" width="1" height="1"/><rect x="792" y="589" width="1" height="1"/><rect x="784" y="593" width="1" height="1"/><rect x="788" y="593" width="1" height="1"/><rect x="792" y="593" width="1" height="1"/></g>
</svg>

<div class="tx" style="left:26.09px;top:8.99px;font-size:13px;line-height:17px;font-weight:700;color:#fff;transform:scaleX(1.0075);text-shadow:1px 1px 0 #0f2d9c">http://localhost/Chapter_11/AuthorsService.asmx/GetAuthors - Microsoft Internet Explorer</div>
<div class="tx" style="left:12.91px;top:33.69px;font-size:11px;line-height:15px;font-weight:400;color:#000;transform:scaleX(0.9337);">File</div>
<div class="tx" style="left:44.62px;top:33.69px;font-size:11px;line-height:15px;font-weight:400;color:#000;transform:scaleX(0.9738);">Edit</div>
<div class="tx" style="left:79.96px;top:33.69px;font-size:11px;line-height:15px;font-weight:400;color:#000;transform:scaleX(0.9026);">View</div>
<div class="tx" style="left:116.48px;top:33.69px;font-size:11px;line-height:15px;font-weight:400;color:#000;transform:scaleX(1.0197);">Favorites</div>
<div class="tx" style="left:178.88px;top:33.69px;font-size:11px;line-height:15px;font-weight:400;color:#000;transform:scaleX(0.9008);">Tools</div>
<div class="tx" style="left:219.05px;top:33.69px;font-size:11px;line-height:15px;font-weight:400;color:#000;transform:scaleX(0.9408);">Help</div>
<div class="tx" style="left:40.16px;top:65.69px;font-size:11px;line-height:15px;font-weight:400;color:#a2a29b;transform:scaleX(0.9335);">Back</div>
<div class="tx" style="left:266.02px;top:65.69px;font-size:11px;line-height:15px;font-weight:400;color:#000;transform:scaleX(0.9661);">Search</div>
<div class="tx" style="left:337.48px;top:65.69px;font-size:11px;line-height:15px;font-weight:400;color:#000;transform:scaleX(1.0242);">Favorites</div>
<div class="tx" style="left:421.96px;top:65.69px;font-size:11px;line-height:15px;font-weight:400;color:#000;transform:scaleX(0.9361);">Media</div>
<div class="tx" style="left:9.98px;top:97.69px;font-size:11px;line-height:15px;font-weight:400;color:#6f6f6a;transform:scaleX(0.9516);">Address</div>
<div class="tx" style="left:74.83px;top:98.69px;font-size:11px;line-height:15px;font-weight:400;color:#000;transform:scaleX(1.0115);">http://localhost/Chapter_11/AuthorsService.asmx/GetAuthors</div>
<div class="tx" style="left:715.19px;top:97.69px;font-size:11px;line-height:15px;font-weight:400;color:#000;transform:scaleX(0.9188);">Go</div>
<div class="tx" style="left:750.56px;top:97.69px;font-size:11px;line-height:15px;font-weight:400;color:#76766f;transform:scaleX(0.9270);">Links</div>
<div class="tx" style="left:24.63px;top:578.69px;font-size:11px;line-height:15px;font-weight:400;color:#000;transform:scaleX(0.9636);">Done</div>
<div class="tx" style="left:664.71px;top:578.69px;font-size:11px;line-height:15px;font-weight:400;color:#000;transform:scaleX(0.9899);">Local intranet</div>
</body></html>
